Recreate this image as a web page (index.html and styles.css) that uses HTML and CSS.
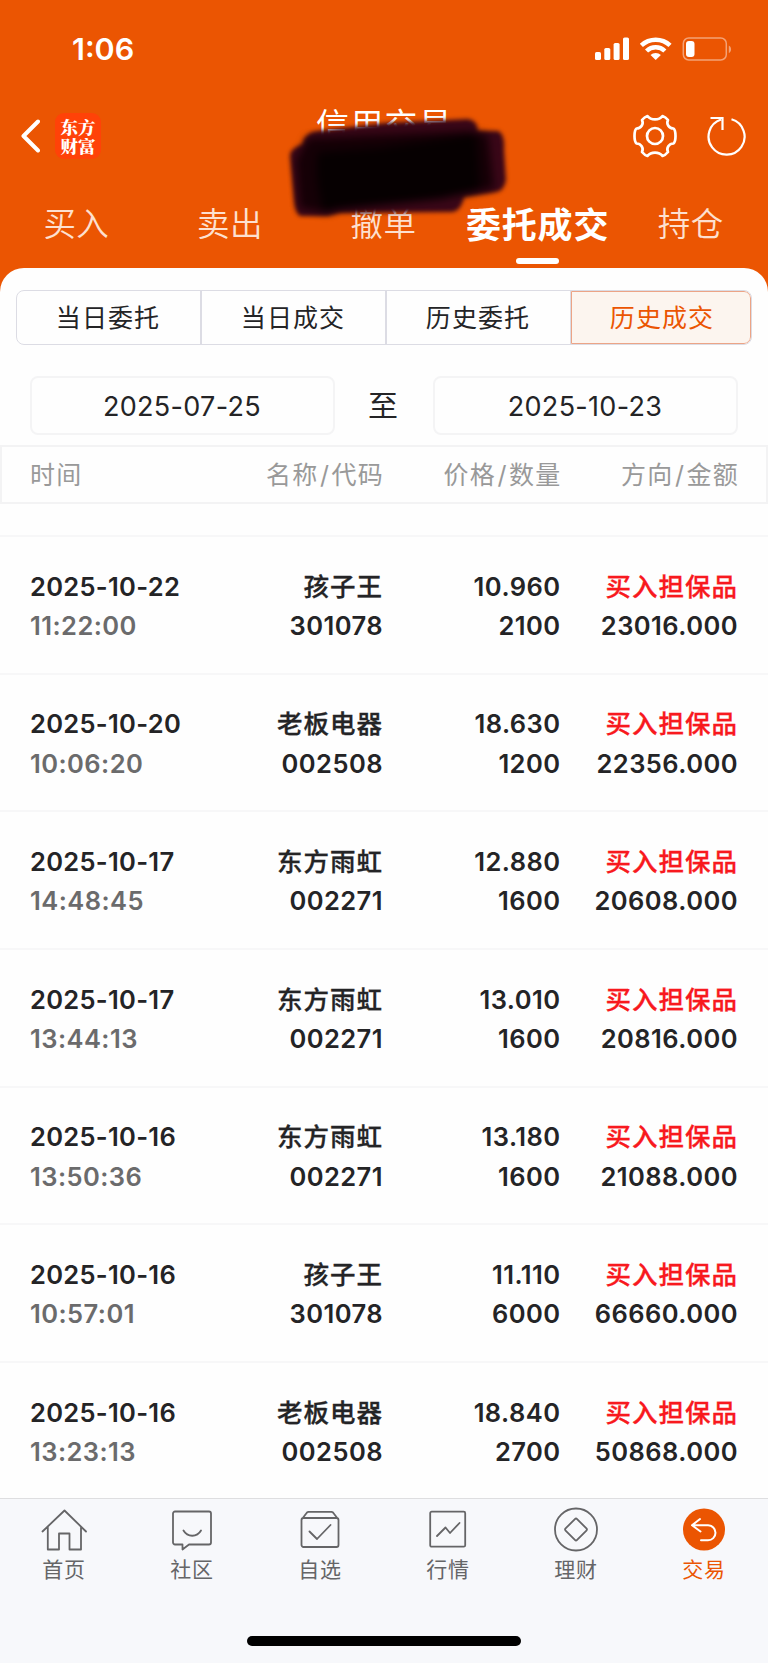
FILE: index.html
```html
<!DOCTYPE html>
<html lang="zh-CN">
<head>
<meta charset="utf-8">
<title>信用交易</title>
<link rel="stylesheet" href="styles.css">
</head>
<body>
<div class="app">
  <header class="header">
    <div class="status">
      <span class="clock">1:06</span>
      <svg class="status-icons" viewBox="0 0 138 26" width="138" height="26" fill="#fff">
        <rect x="0" y="16" width="6" height="8" rx="1.6"/><rect x="9.3" y="12" width="6" height="12" rx="1.6"/><rect x="18.6" y="7" width="6" height="17" rx="1.6"/><rect x="28" y="1.5" width="6" height="22.5" rx="1.6"/>
        <path d="M44.800 7.800a23 23 0 0 1 31.800 0l-3.100 3.300a18.500 18.500 0 0 0-25.600 0zM50 13.400a15.500 15.500 0 0 1 21.400 0l-3.100 3.200a11 11 0 0 0-15.200 0z"/>
        <path d="M55.500 19a7.500 7.500 0 0 1 10.400 0L60.700 24z"/>
        <rect x="88.3" y="2" width="43" height="22" rx="5.5" fill="none" stroke="#f4a276" stroke-width="1.500"/>
        <rect x="91" y="5" width="8.5" height="16" rx="3"/>
        <path d="M133.800 9.500c3 1.200 3 6.500 0 7.500z" fill="#f4a276"/>
      </svg>
    </div>
    <div class="titlebar">
      <svg class="back" viewBox="0 0 20 34" width="20" height="34"><path d="M18 2.500 3.500 17 18 31.500" fill="none" stroke="#fff" stroke-width="4" stroke-linecap="round" stroke-linejoin="round"/></svg>
      <div class="logo">东方<br>财富</div>
      <h1 class="title">信用交易</h1>
      <svg class="gear" viewBox="-22 -22 44 44" width="44" height="44" fill="none" stroke="#fff" stroke-width="2.700" stroke-linejoin="round"><circle r="8"/><path d="M-7.500-20Q-10.500-19-13-16C-11-12-14-7.500-18.500-7.500Q-20.500-6-20.500 0T-18.500 7.500C-14 7.500-11 12-13 16Q-10.500 19-7.500 20C-4 15.500 4 15.500 7.500 20Q10.500 19 13 16C11 12 14 7.500 18.500 7.500Q20.500 6 20.500 0T18.500-7.500C14-7.500 11-12 13-16Q10.500-19 7.500-20C4-15.500-4-15.500-7.500-20Z"/></svg>
      <svg class="reload" viewBox="0 0 40 40" width="40" height="40" fill="none" stroke="#fff" stroke-width="2.200"><path d="M24.500 3.300a18 18 0 1 1-10.500.200M3.500 2H15.500V14"/></svg>
    </div>
    <nav class="tabs"><a>买入</a><a>卖出</a><a>撤单</a><a class="active">委托成交</a><a>持仓</a></nav>
    <svg class="scribble" viewBox="280 100 240 130" width="240" height="130">
      <g class="ink outer">
        <path d="M303 142Q306 132 318 131L385 123L468 119Q477 120 478 131L498 131Q505 134 504 150L506 180Q504 191 496 192L464 197Q461 211 452 212L340 213L328 216L300 216Q295 213 294 200L290 155Q291 148 303 144Z"/>
      </g>
      <g class="ink core">
        <path d="M308 138L468 131L488 135L494 188L440 199L340 209L322 212L300 208L296 160Z" fill="#150006"/>
        <path d="M320 152L380 148L476 134L480 190L440 199L340 209L324 213Q314 180 318 152Z" fill="#060001"/>
      </g>
    </svg>
  </header>
  <main class="sheet">
    <div class="segments"><a>当日委托</a><a>当日成交</a><a>历史委托</a><a class="on">历史成交</a></div>
    <div class="range"><div class="date">2025-07-25</div><span class="to">至</span><div class="date">2025-10-23</div></div>
    <div class="cols head"><span>时间</span><span>名称<u>/</u>代码</span><span>价格<u>/</u>数量</span><span>方向<u>/</u>金额</span></div>
    <div class="rows">
      <div class="cols row"><div>2025-10-22<br><i>11:22:00</i></div><div><em>孩子王</em><br>301078</div><div>10.960<br>2100</div><div><b>买入担保品</b><br>23016.000</div></div>
      <div class="cols row"><div>2025-10-20<br><i>10:06:20</i></div><div><em>老板电器</em><br>002508</div><div>18.630<br>1200</div><div><b>买入担保品</b><br>22356.000</div></div>
      <div class="cols row"><div>2025-10-17<br><i>14:48:45</i></div><div><em>东方雨虹</em><br>002271</div><div>12.880<br>1600</div><div><b>买入担保品</b><br>20608.000</div></div>
      <div class="cols row"><div>2025-10-17<br><i>13:44:13</i></div><div><em>东方雨虹</em><br>002271</div><div>13.010<br>1600</div><div><b>买入担保品</b><br>20816.000</div></div>
      <div class="cols row"><div>2025-10-16<br><i>13:50:36</i></div><div><em>东方雨虹</em><br>002271</div><div>13.180<br>1600</div><div><b>买入担保品</b><br>21088.000</div></div>
      <div class="cols row"><div>2025-10-16<br><i>10:57:01</i></div><div><em>孩子王</em><br>301078</div><div>11.110<br>6000</div><div><b>买入担保品</b><br>66660.000</div></div>
      <div class="cols row"><div>2025-10-16<br><i>13:23:13</i></div><div><em>老板电器</em><br>002508</div><div>18.840<br>2700</div><div><b>买入担保品</b><br>50868.000</div></div>
    </div>
  </main>
  <footer class="bottom">
    <nav class="dock">
      <a><svg viewBox="0 0 48 48"><path d="M2.500 25.500 24.500 4.500 46 25.500M7.800 21v22.500H19v-16H29.500v16H41V21"/></svg>首页</a>
      <a><svg viewBox="0 0 48 48"><path d="M7 5.500H41a2 2 0 0 1 2 2V36.500a2 2 0 0 1-2 2H21L14.500 43.500V38.500H7a2 2 0 0 1-2-2V7.500a2 2 0 0 1 2-2ZM15.500 24.500c4 7 13.500 7 17.500 0"/></svg>社区</a>
      <a><svg viewBox="0 0 48 48"><path d="M6 13 11 6.500Q11.700 5.800 12.500 5.800H35.500Q36.300 5.800 37 6.500L42 13M7.500 12H40.500a2 2 0 0 1 2 2V39a2 2 0 0 1-2 2H7.500a2 2 0 0 1-2-2V14a2 2 0 0 1 2-2ZM13.500 25.500 21 33 34.500 19"/></svg>自选</a>
      <a><svg viewBox="0 0 48 48"><rect x="6.200" y="5.700" width="35" height="35" rx="1.500"/><path d="M13 30 21.500 21.500 26 27 35.500 17"/></svg>行情</a>
      <a><svg viewBox="0 0 48 48"><circle cx="24" cy="23.500" r="21"/><path d="M22.900 13.100Q24 12 25.100 13.100L34.400 22.400Q35.500 23.500 34.400 24.600L25.100 33.900Q24 35 22.900 33.900L13.600 24.600Q12.500 23.500 13.600 22.400Z"/></svg>理财</a>
      <a class="current"><svg viewBox="0 0 48 48"><circle class="disc" cx="24" cy="23.500" r="21"/><path d="M20 13 12 19.300 20.500 25.500M12 19.300H28a7.500 7.500 0 0 1 0 15H21"/></svg>交易</a>
    </nav>
    <div class="home-bar"></div>
  </footer>
</div>
</body>
</html>
```
FILE: styles.css
```css
* { box-sizing: border-box; }
body { margin: 0; font-family: Inter, "Noto Sans CJK SC", sans-serif; color: #242426; background: #eb5502; }
.app { width: 768px; height: 1663px; display: flex; flex-direction: column; overflow: hidden; }
svg { display: block; flex: none; }
.header { position: relative; height: 268px; flex: none; color: #fff; }
.status { height: 98px; padding: 0 35px 0 72px; display: flex; justify-content: space-between; align-items: center; }
.clock { font-size: 30.5px; font-weight: 600; line-height: 40px; }
.titlebar { height: 76px; display: flex; align-items: center; padding-left: 20px; }
.logo { width: 46px; height: 46px; margin-left: 15px; padding-top: 4px; border-radius: 9px; background: #ff4208; text-align: center; font: 900 17.5px/19px "Noto Serif CJK SC", "Noto Sans CJK SC", sans-serif; }
.title { margin: -22px 0 0 215px; width: 138px; font-size: 33px; font-weight: 400; line-height: 40px; letter-spacing: 1.2px; white-space: nowrap; }
.gear { margin-left: 179px; }
.reload { margin-left: 30px; }
.tabs { display: grid; grid-template-columns: repeat(5, 1fr); height: 94px; }
.tabs a { display: flex; flex-direction: column; align-items: center; padding-top: 27px; font-size: 32.5px; line-height: 48px; font-weight: 350; letter-spacing: .4px; color: #fde0d0; white-space: nowrap; }
.tabs a:not(.active) { padding-right: 1px; }
.tabs .active { font-size: 35px; font-weight: 700; letter-spacing: .8px; color: #fff; }
.tabs .active::after { content: ""; width: 43px; height: 6px; margin-top: 9px; border-radius: 3px; background: #fff; }
.scribble { position: absolute; left: 280px; top: 100px; }
.outer { filter: blur(2px); fill: #3a0718; }
.core { filter: blur(4px); }
.sheet { flex: 1; min-height: 0; overflow: hidden; background: #fefefe; border-radius: 24px 24px 0 0; padding-top: 22px; }
.segments { display: grid; grid-template-columns: 185px 185px 184px 1fr; height: 55px; margin: 0 16px; border: 1px solid #dcdce4; border-radius: 8px; overflow: hidden; }
.segments a { display: flex; align-items: center; justify-content: center; padding: 0 1px 3px 0; font-size: 25px; letter-spacing: 1.1px; border-right: 2px solid #dcdce4; }
.segments a:nth-child(3) { border-right-width: 1px; }
.segments .on { color: #eb5502; background: #fcf5ef; border: 1.5px solid #eca486; border-radius: 0 7px 7px 0; padding: 0 0 3px 2px; }
.range { display: flex; justify-content: space-between; align-items: flex-start; margin: 31px 30px 9px; height: 60px; }
.date { width: 305px; height: 59px; border: 2px solid #f4f4f5; border-radius: 8px; display: flex; align-items: center; justify-content: center; padding: 1px 1px 0 0; font-size: 27px; letter-spacing: .3px; }
.to { font-size: 30px; line-height: 40px; margin: 9px 2px 0 0; }
.cols { display: grid; grid-template-columns: 150px 203px 177.5px 177.5px; padding-left: 30px; }
.cols > * { text-align: right; white-space: nowrap; }
.cols > :first-child { text-align: left; }
.head { height: 59px; align-items: center; font-size: 25px; letter-spacing: 1.2px; font-weight: 400; color: #999; border: 2px solid #f3f3f4; padding: 0 0 3px 28px; }
.head > * + * { position: relative; left: 1px; }
.head u { text-decoration: none; margin: 0 1.5px; }
.rows { margin-top: 31px; }
.row { height: 137.7px; border-top: 2px solid #f7f7f8; padding-top: 29.5px; font-size: 25.5px; line-height: 39.5px; font-weight: 600; letter-spacing: .45px; }
.row > :first-child { letter-spacing: .3px; }
.row i { font-style: normal; color: #6b6b6c; letter-spacing: .45px; }
.row b, .row em { font-style: normal; font-weight: 500; letter-spacing: 1px; -webkit-text-stroke: .3px currentColor; }
.row b { color: #f8191e; }
.bottom { height: 165px; flex: none; background: #f7f8fb; border-top: 1px solid #dedee0; }
.dock { display: grid; grid-template-columns: repeat(6, 1fr); height: 137px; }
.dock a { display: flex; flex-direction: column; align-items: center; padding-top: 7px; color: #656567; font-size: 21px; line-height: 32px; letter-spacing: .8px; }
.dock svg { width: 48px; height: 48px; fill: none; stroke: #656567; stroke-width: 1.8; stroke-linecap: round; stroke-linejoin: round; }
.dock .current { color: #eb5502; }
.dock .current svg { stroke: #fff; stroke-width: 2; }
.dock .disc { fill: #eb5502; stroke: none; }
.home-bar { width: 274px; height: 10px; margin: 0 auto; border-radius: 5px; background: #000; }
```
